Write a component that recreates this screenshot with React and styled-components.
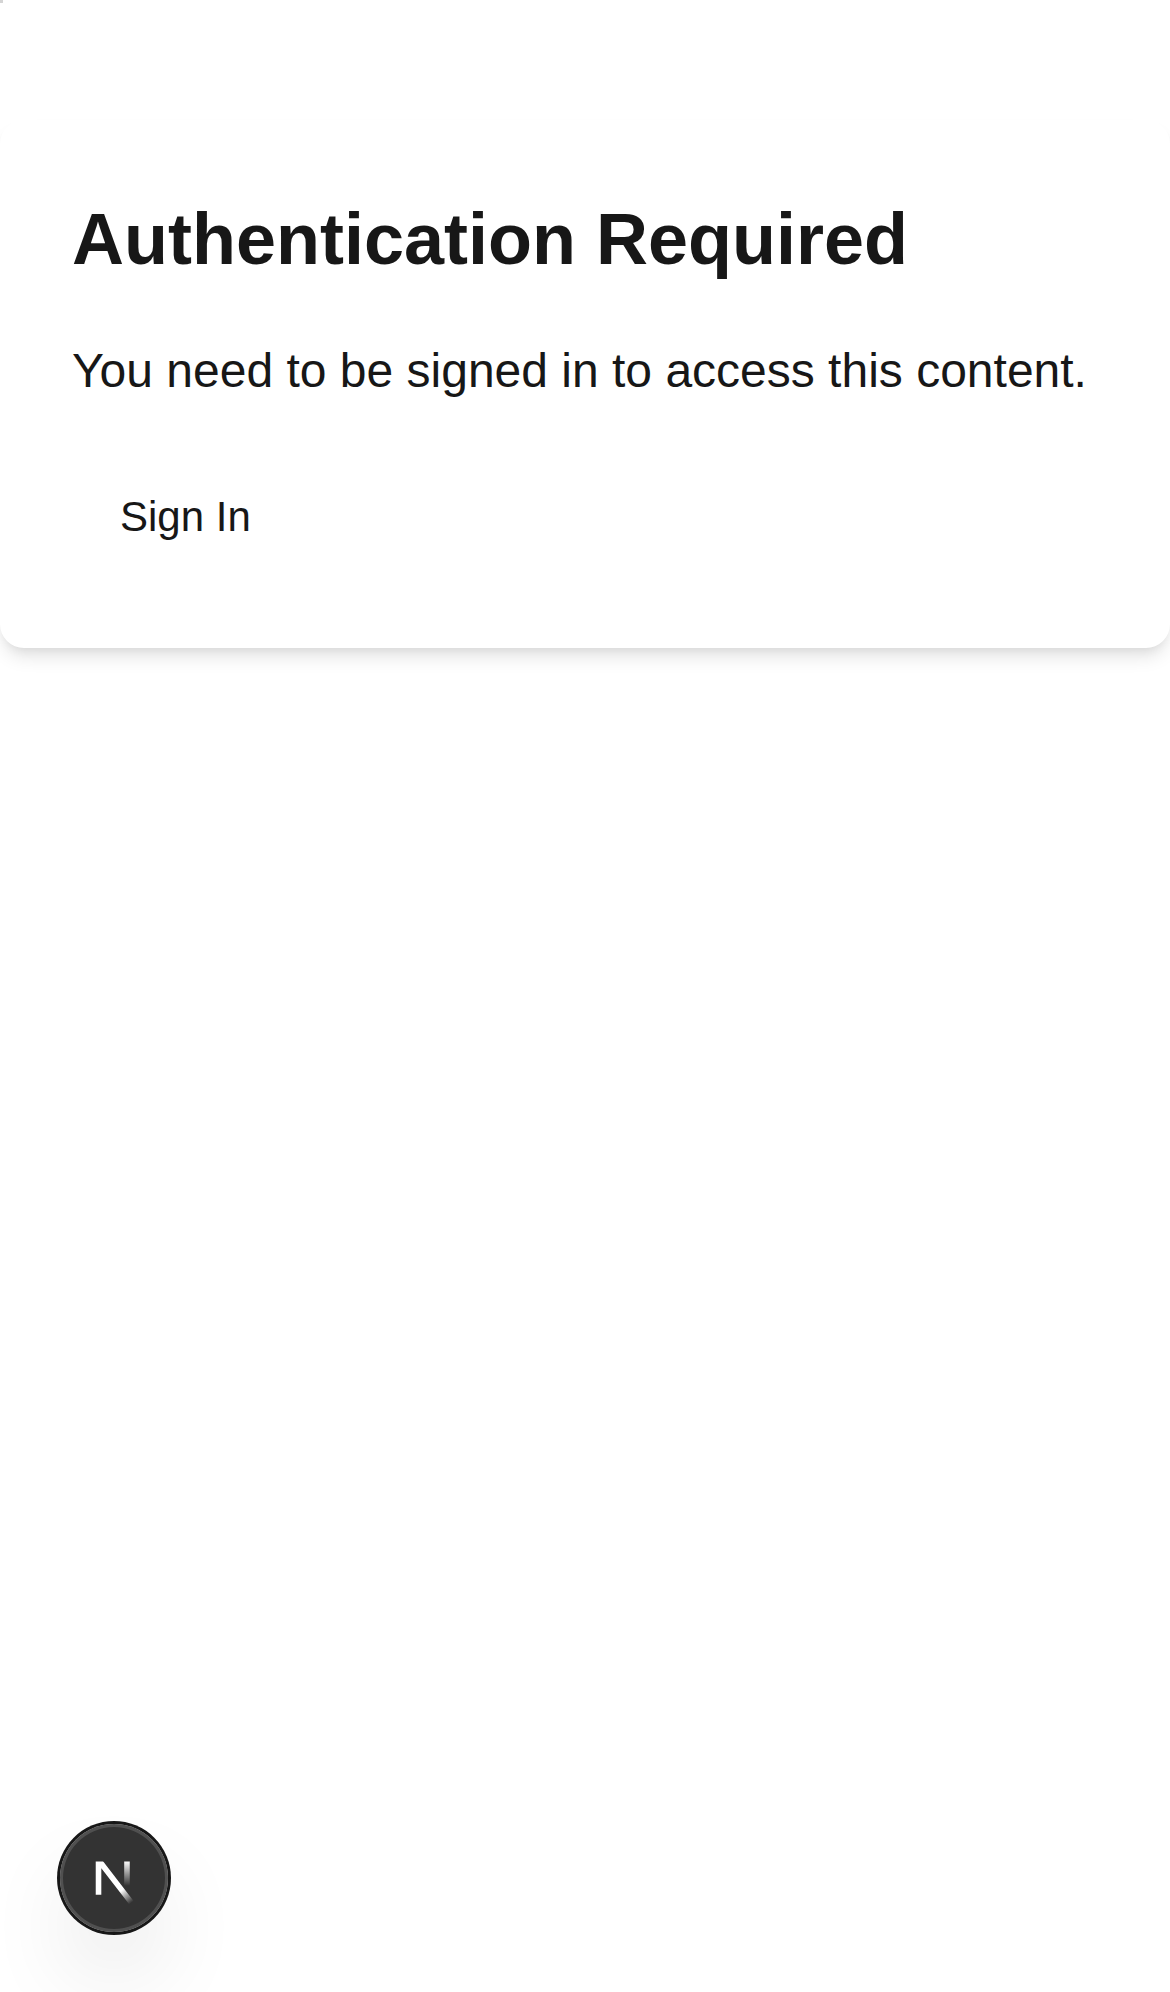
import React from "react";
import styled, { createGlobalStyle } from "styled-components";

const GlobalStyle = createGlobalStyle`
  *, *::before, *::after { box-sizing: border-box; }
  body {
    margin: 0;
    background: #ffffff;
    color: #171717;
    font-family: "Liberation Sans", Arial, Helvetica, sans-serif;
    -webkit-font-smoothing: antialiased;
  }
`;

const Page = styled.main`
  min-height: 1992px;
  padding-top: 120px;
  overflow: hidden;
`;

const Marker = styled.span`
  position: absolute;
  top: 0;
  left: 0;
  width: 3px;
  height: 3px;
  background: #d4d4d4;
`;

const Card = styled.section`
  display: flex;
  flex-direction: column;
  align-items: flex-start;
  gap: 48px;
  padding: 71px 72px 72px;
  border-radius: 24px;
  background: #ffffff;
  box-shadow:
    0 12px 18px -3px rgba(0, 0, 0, 0.1),
    0 6px 12px -6px rgba(0, 0, 0, 0.1);
`;

const Title = styled.h2`
  margin: 0;
  font-size: 72px;
  font-weight: 700;
  line-height: 96px;
  white-space: nowrap;
`;

const Message = styled.p`
  margin: 0;
  font-size: 48px;
  line-height: 72px;
  white-space: nowrap;
`;

const SignInButton = styled.button`
  height: 121px;
  padding: 3px 48px 0;
  border: 0;
  border-radius: 18px;
  background: transparent;
  color: inherit;
  font: 400 42px/60px "Liberation Sans", Arial, sans-serif;
`;

const DevBadge = styled.div`
  position: fixed;
  left: 60px;
  bottom: 60px;
  width: 108px;
  height: 108px;
  display: grid;
  place-items: center;
  border-radius: 50%;
  background: rgba(0, 0, 0, 0.8);
  box-shadow:
    0 0 0 3px #171717,
    inset 0 0 0 3px rgba(255, 255, 255, 0.14),
    0 48px 96px -24px rgba(0, 0, 0, 0.24);
`;

const Logo = styled.svg`
  display: block;
  width: 60px;
  height: 60px;
  overflow: visible;
`;

function NextLogo() {
  return (
    <Logo viewBox="0 0 20 20" fill="none" aria-hidden="true">
      <defs>
        <linearGradient id="diagonalFade" x1="9.95555" y1="11.1226" x2="15.4778" y2="17.9671" gradientUnits="userSpaceOnUse">
          <stop stopColor="white" />
          <stop offset="0.604072" stopColor="white" stopOpacity="0" />
          <stop offset="1" stopColor="white" stopOpacity="0" />
        </linearGradient>
        <linearGradient id="stemFade" x1="11.8222" y1="1.40039" x2="11.791" y2="9.62542" gradientUnits="userSpaceOnUse">
          <stop stopColor="white" />
          <stop offset="1" stopColor="white" stopOpacity="0" />
        </linearGradient>
        <mask id="topCut" maskUnits="userSpaceOnUse" x="0" y="0" width="20" height="20">
          <rect width="20" height="20" fill="white" />
          <rect width="5" height="1.5" fill="black" />
        </mask>
      </defs>
      <g transform="translate(2.5, 3)">
        <path d="M13.3 15.2 L2.34 1 V12.6" stroke="url(#diagonalFade)" strokeWidth="1.86" mask="url(#topCut)" />
        <path d="M11.825 1.5 V13.1" stroke="url(#stemFade)" strokeWidth="1.86" />
      </g>
    </Logo>
  );
}

export default function App() {
  return (
    <>
      <GlobalStyle />
      <Page>
        <Marker />
        <Card>
          <Title>Authentication Required</Title>
          <Message>You need to be signed in to access this content.</Message>
          <SignInButton type="button">Sign In</SignInButton>
        </Card>
      </Page>
      <DevBadge>
        <NextLogo />
      </DevBadge>
    </>
  );
}
